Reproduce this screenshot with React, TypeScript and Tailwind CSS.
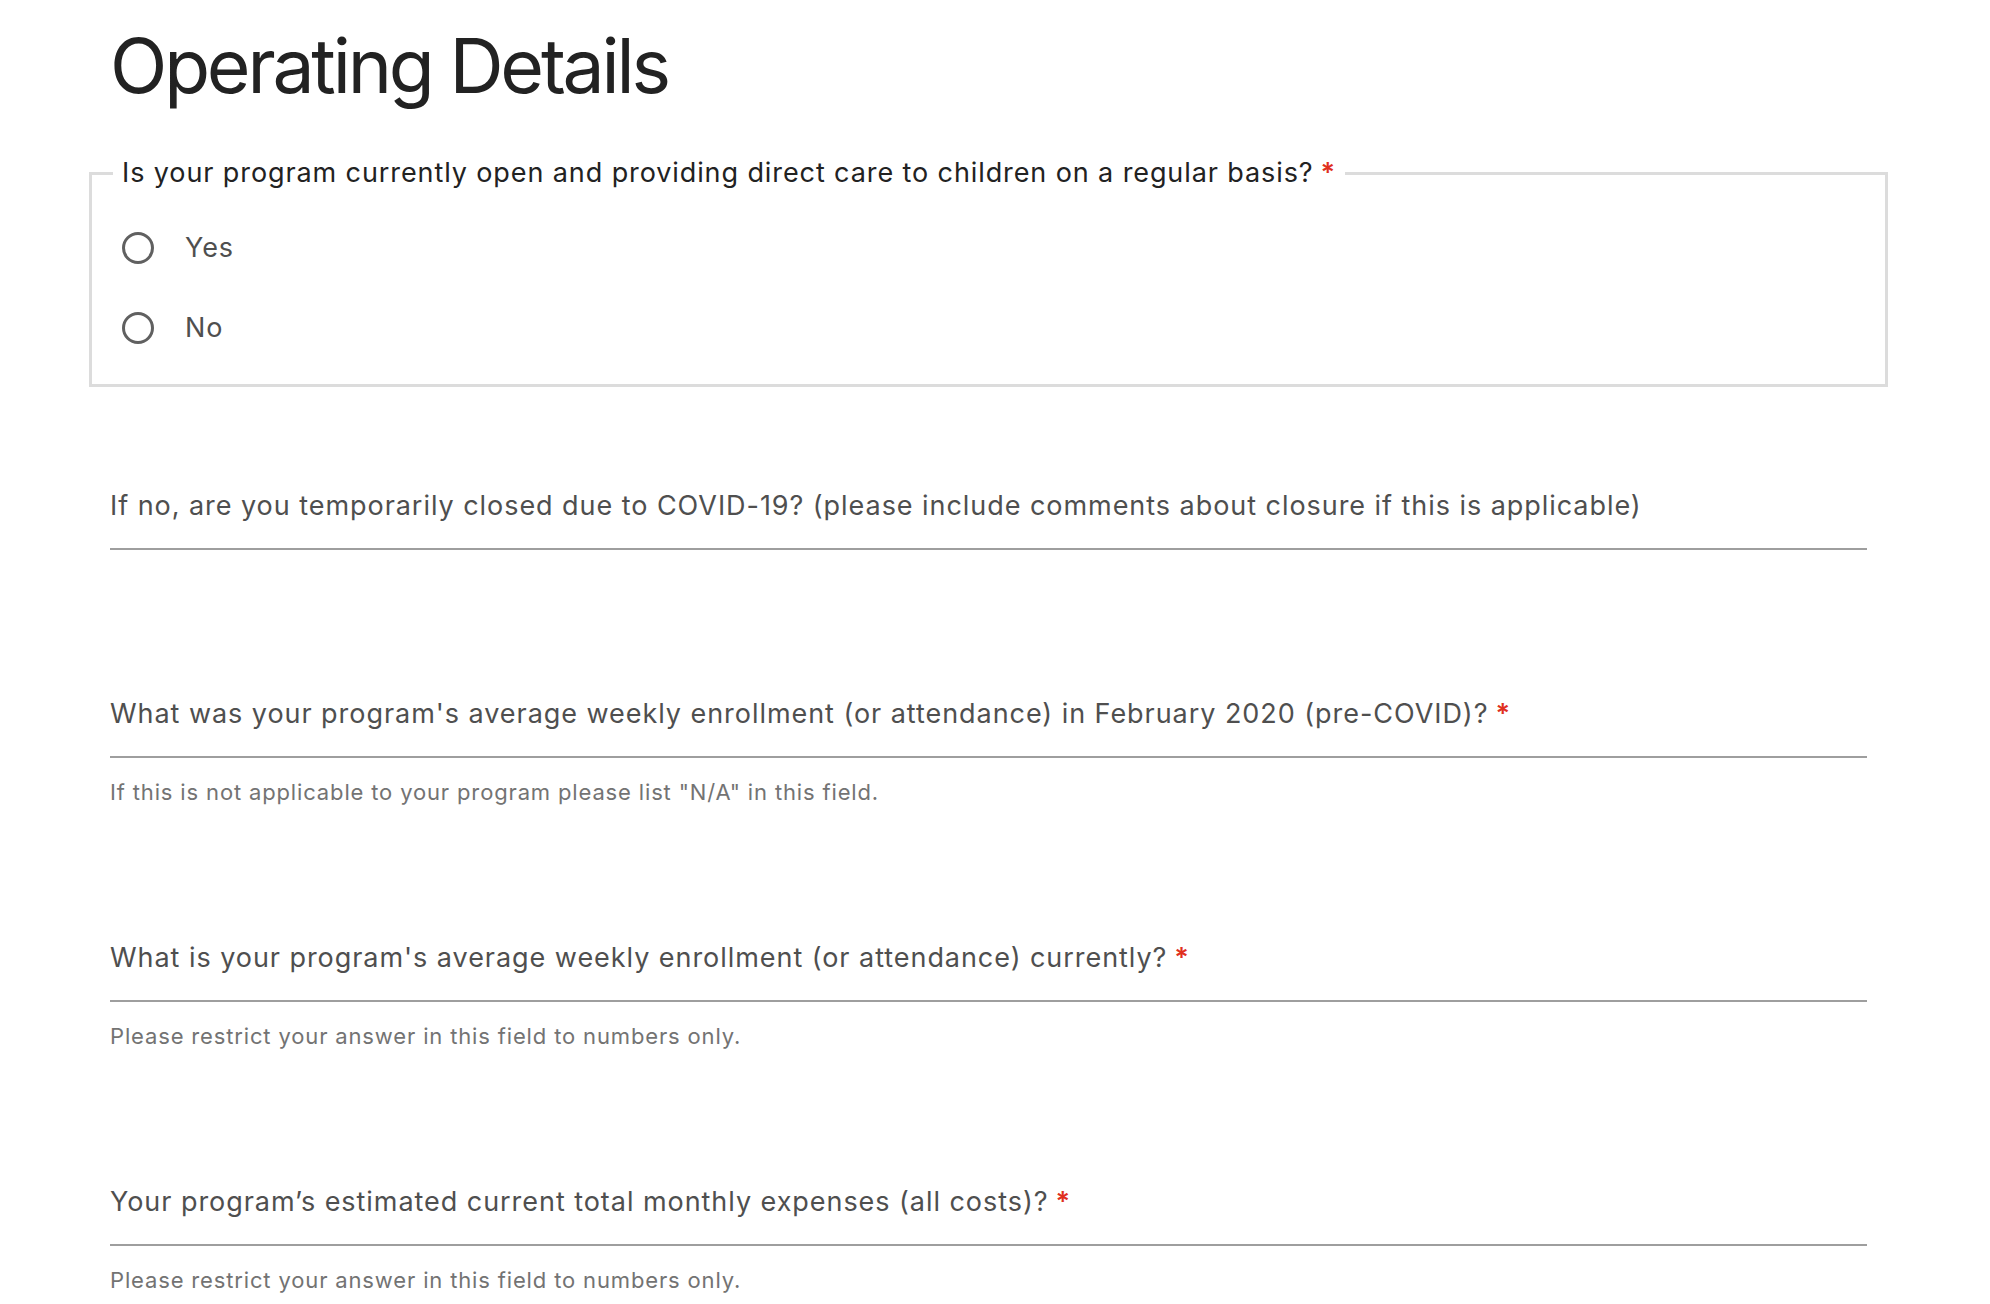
import React from "react";

const font = { fontFamily: "Inter, 'Noto Sans', sans-serif" };

function Req() {
  return <span className="text-[#e0301e] font-semibold ml-[7px]">*</span>;
}

function Question({
  label,
  required,
  helper,
  className,
}: {
  label: string;
  required?: boolean;
  helper?: string;
  className?: string;
}) {
  return (
    <div className={"px-[21px] " + (className ?? "")}>
      <label className="block text-[27px] leading-[40px] tracking-[0.95px] text-[#4f4f4f]">
        {label}
        {required && <Req />}
      </label>
      <input
        type="text"
        className="block w-full h-[24px] border-b-2 border-[#9e9e9e] outline-none bg-transparent"
      />
      {helper && (
        <p className="mt-[18px] text-[22px] leading-[33px] tracking-[0.85px] text-[#737373]">{helper}</p>
      )}
    </div>
  );
}

export default function App() {
  return (
    <div className="bg-white min-h-[1304px] overflow-hidden" style={font}>
      <div className="ml-[89px] w-[1799px]">
        <h1 className="pt-[28px] px-[21px] text-[75px] leading-none tracking-[-3.2px] text-[#222222] font-normal">
          Operating Details
        </h1>
        <fieldset className="mt-[50px] border-[3px] border-[#dcdcdc] pl-[21px] pr-[21px] pt-[15px] pb-[16px]">
          <legend className="px-[9px] text-[27px] leading-[40px] tracking-[0.9px] text-[#222222]">
            Is your program currently open and providing direct care to children on a regular basis?
            <Req />
          </legend>
          <div className="pl-[9px]">
            {["Yes", "No"].map((o) => (
              <label key={o} className="flex items-center h-[80px] cursor-pointer">
                <span className="w-[32px] h-[32px] rounded-full border-[3px] border-[#606060] shrink-0" />
                <span className="ml-[31px] text-[27px] tracking-[0.9px] text-[#4f4f4f]">{o}</span>
              </label>
            ))}
          </div>
        </fieldset>
        <Question
          className="mt-[99px]"
          label="If no, are you temporarily closed due to COVID-19? (please include comments about closure if this is applicable)"
        />
        <Question
          className="mt-[144px]"
          required
          label="What was your program's average weekly enrollment (or attendance) in February 2020 (pre-COVID)?"
          helper={'If this is not applicable to your program please list "N/A" in this field.'}
        />
        <Question
          className="mt-[129px]"
          required
          label="What is your program's average weekly enrollment (or attendance) currently?"
          helper="Please restrict your answer in this field to numbers only."
        />
        <Question
          className="mt-[129px]"
          required
          label="Your program’s estimated current total monthly expenses (all costs)?"
          helper="Please restrict your answer in this field to numbers only."
        />
      </div>
    </div>
  );
}
